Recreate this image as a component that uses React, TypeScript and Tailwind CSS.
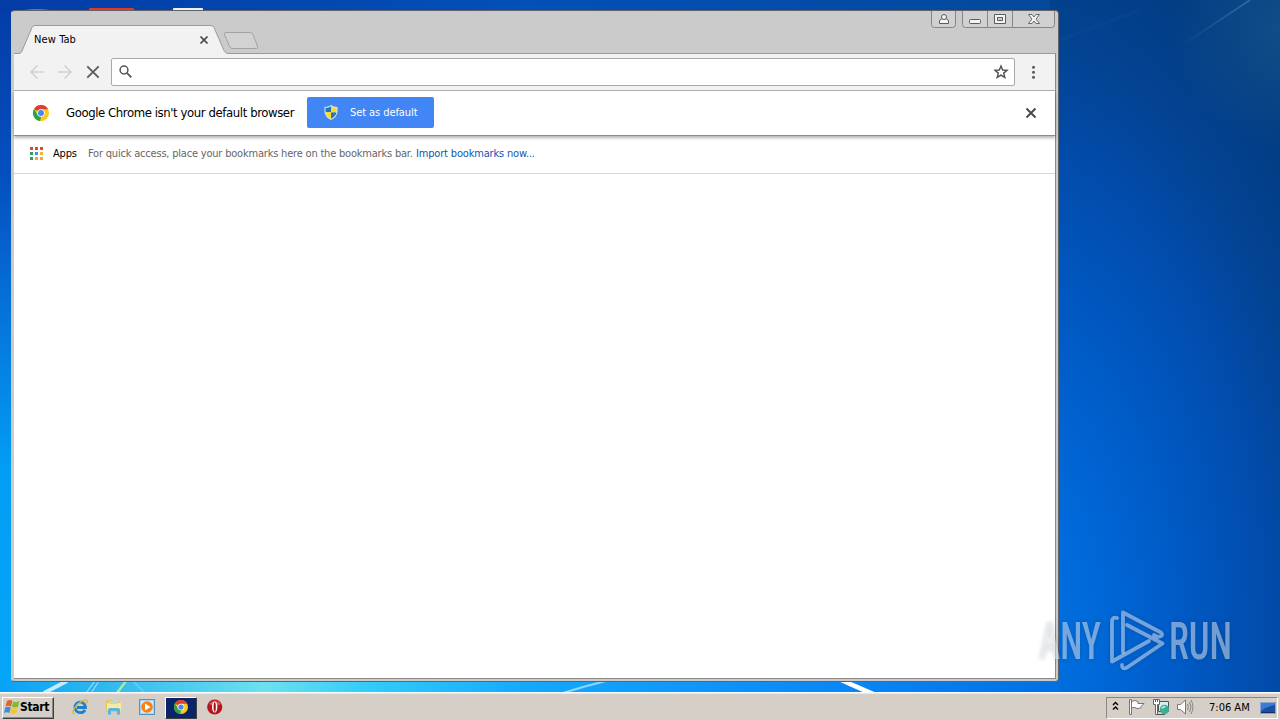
import React from "react";

const UI_FONT = "font-['DejaVu_Sans_Condensed','DejaVu_Sans',sans-serif] [font-stretch:condensed]";

function Wallpaper() {
  return (
    <svg className="absolute inset-0" width="1280" height="720" viewBox="0 0 1280 720">
      <defs>
        <linearGradient id="left" x1="0" y1="0" x2="0" y2="1">
          <stop offset="0" stopColor="#043ca6" />
          <stop offset="0.25" stopColor="#0450c0" />
          <stop offset="0.45" stopColor="#0676dc" />
          <stop offset="0.65" stopColor="#029df4" />
          <stop offset="1" stopColor="#05a8fb" />
        </linearGradient>
        <linearGradient id="top" x1="0" y1="0" x2="1" y2="0">
          <stop offset="0" stopColor="#043ca6" />
          <stop offset="0.5" stopColor="#0250b8" />
          <stop offset="1" stopColor="#04489a" />
        </linearGradient>
        <radialGradient id="right" gradientUnits="userSpaceOnUse" cx="0" cy="0" r="720" gradientTransform="translate(1000 640) scale(.54 1)">
          <stop offset="0" stopColor="#0074e6" />
          <stop offset="0.2" stopColor="#006cdc" />
          <stop offset="0.35" stopColor="#0062d0" />
          <stop offset="0.53" stopColor="#0056be" />
          <stop offset="0.7" stopColor="#024baa" />
          <stop offset="0.84" stopColor="#034392" />
          <stop offset="1" stopColor="#023d84" />
        </radialGradient>
        <radialGradient id="haze" gradientUnits="userSpaceOnUse" cx="1290" cy="30" r="120">
          <stop offset="0" stopColor="#3c7a90" stopOpacity="0.28" />
          <stop offset="1" stopColor="#3c7a90" stopOpacity="0" />
        </radialGradient>
        <linearGradient id="streak" x1="0" y1="1" x2="1" y2="0">
          <stop offset="0" stopColor="#5b91bd" stopOpacity="0" />
          <stop offset="1" stopColor="#5b91bd" stopOpacity="0.5" />
        </linearGradient>
        <linearGradient id="bottom" x1="0" y1="0" x2="1" y2="0">
          <stop offset="0" stopColor="#08a2f6" />
          <stop offset="0.08" stopColor="#28b4f0" />
          <stop offset="0.25" stopColor="#6ce0ee" />
          <stop offset="0.35" stopColor="#30ccfa" />
          <stop offset="0.5" stopColor="#14a8fc" />
          <stop offset="0.8" stopColor="#0a86f6" />
          <stop offset="1" stopColor="#0070e4" />
        </linearGradient>
      </defs>
      <rect width="640" height="720" fill="url(#left)" />
      <rect width="1060" height="12" fill="url(#top)" />
      <rect x="1050" width="230" height="720" fill="url(#right)" />
      <rect x="1050" width="230" height="180" fill="url(#haze)" />
      <rect y="680" width="1060" height="14" fill="url(#bottom)" />
      <path d="M1182 45L1250 0" stroke="url(#streak)" strokeWidth="1.5" />
      <path d="M1060 40L1140 10" stroke="#5b91bd" strokeOpacity=".05" strokeWidth="4" />
      <path d="M44 693L67 681" stroke="#c5ecfb" strokeWidth="4" />
      <path d="M86 693L95 681M91 693L99 681" stroke="#9bdcf6" strokeWidth="1.2" />
      <path d="M117 693L126 681" stroke="#a7e8a6" strokeWidth="2.5" />
      <path d="M133 681L145 693" stroke="#5ccdf0" strokeWidth="2" />
      <path d="M563 693Q585 686 606 681" stroke="#8fd6ff" strokeWidth="2" fill="none" />
      <path d="M838 681L849 681L879 694L867 694Z" fill="#fff" />
      {/* tops of the desktop icons behind the window */}
      <path d="M24 10Q37 8 50 10V11H24Z" fill="#5a7fc0" />
      <rect x="89" y="8" width="45" height="3" rx="1" fill="#e03a24" />
      <rect x="173" y="8" width="30" height="3" rx="1" fill="#eef2f6" />
    </svg>
  );
}

function ChromeIcon({ size = 16 }: { size?: number }) {
  return (
    <svg width={size} height={size} viewBox="0 0 16 16">
      <circle cx="8" cy="8" r="8" fill="#fbc916" />
      <path d="M8 8L1.07 4A8 8 0 0 1 14.93 4L14.9 4.3H8Z" fill="#df3e30" />
      <path d="M1.07 4L4.8 9.9L8 11.6L7.2 16A8 8 0 0 1 1.07 4Z" fill="#2ba24c" />
      <circle cx="8" cy="8" r="3.8" fill="#fff" />
      <circle cx="8" cy="8" r="3" fill="#4688f1" />
    </svg>
  );
}

function TitleBar() {
  return (
    <div className="relative h-[43px] shrink-0">
      <svg className="absolute left-0 top-0" width="1046" height="43" viewBox="12 11 1046 43">
        <path d="M14 54V53.5H19Q21 53.5 22 51L32 27.5Q33 25.5 35 25.5H211Q213 25.5 214 27.5L224 50.5Q225.5 53.5 228 53.5H1056V54Z" fill="#f2f2f2" />
        <path d="M14 53.5H19Q21 53.5 22 51L32 27.5Q33 25.5 35 25.5H211Q213 25.5 214 27.5L224 50.5Q225.5 53.5 228 53.5H1056" fill="none" stroke="#9a9a9a" />
        <path d="M226 32.5H250Q252 32.5 253 34.5L257.5 46Q258.5 48.5 256.5 48.5H232.5Q230.5 48.5 229.5 46.5L224.5 34.5Q223.8 32.5 226 32.5Z" fill="#d2d2d2" stroke="#a2a2a2" />
        <path d="M200.5 36.5L207.5 43.5M207.5 36.5L200.5 43.5" stroke="#444" strokeWidth="1.7" />
        <g fill="#d1d1d1" stroke="#858585">
          <path d="M931.5 11V24.5Q931.5 27.5 934.5 27.5H952.5Q955.5 27.5 955.5 24.5V11" />
          <path d="M962.5 11V24.5Q962.5 27.5 965.5 27.5H1051.5Q1054.5 27.5 1054.5 24.5V11M987.5 11V27M1012.5 11V27" />
        </g>
        <g fill="#f4f4f4" stroke="#5c5c5c">
          <path d="M939.5 23.5V21Q940 19 942 18.8H946Q948.3 19 948.5 21V23.5Z" />
          <circle cx="944" cy="17" r="2.5" />
          <rect x="969.5" y="19.5" width="11" height="4" rx="1" />
          <path fillRule="evenodd" d="M994.5 14.5H1005.5V23.5H994.5ZM997.5 17.5V20.5H1002.5V17.5Z" />
          <path d="M1028.5 14.5H1032L1034 17L1036 14.5H1039.5L1036 19L1039.5 23.5H1036L1034 21L1032 23.5H1028.5L1032 19Z" strokeWidth=".9" />
        </g>
      </svg>
      <span className="absolute left-[22px] top-[21px] whitespace-nowrap text-[11px] leading-[15px] tracking-[0.1px] text-black">New Tab</span>
    </div>
  );
}

function Toolbar() {
  return (
    <div className="flex h-[37px] shrink-0 items-center border-b border-[#b0b0b0] bg-[#f2f2f2]">
      <svg width="97" height="36" viewBox="14 54 97 36" fill="none" className="shrink-0">
        <g stroke="#d2d2d2" strokeWidth="1.7">
          <path d="M44 72H31.5M37.5 65.5L31 72L37.5 78.5" />
          <path d="M58 72H70.5M64.5 65.5L71 72L64.5 78.5" />
        </g>
        <path d="M87.3 66.3L98.7 77.7M98.7 66.3L87.3 77.7" stroke="#5a5a5a" strokeWidth="1.8" />
      </svg>
      <div className="flex h-7 w-[904px] items-center justify-between rounded-[2px] border border-[#a9a9a9] bg-white pl-[6px] pr-[5px]">
        <svg width="16" height="16" viewBox="0 0 16 16" fill="none" stroke="#555">
          <circle cx="6" cy="6" r="3.9" strokeWidth="1.5" />
          <path d="M8.8 8.8L13.3 13.3" strokeWidth="1.8" />
        </svg>
        <svg width="16" height="16" viewBox="0 0 16 16" fill="none" stroke="#505050" strokeWidth="1.4">
          <path d="M8 2L9.7 6L14 6.3L10.7 9.1L11.8 13.4L8 11.1L4.2 13.4L5.3 9.1L2 6.3L6.3 6Z" />
        </svg>
      </div>
      <svg width="37" height="20" viewBox="0 0 37 20" fill="#5a5a5a">
        <circle cx="18.5" cy="5.3" r="1.5" />
        <circle cx="18.5" cy="10.3" r="1.5" />
        <circle cx="18.5" cy="15.3" r="1.5" />
      </svg>
    </div>
  );
}

function DefaultBrowserBar() {
  return (
    <div className="relative z-10 flex h-[45px] shrink-0 items-center border-b border-[#8c8c8c] bg-white pb-px pl-[19px] shadow-[0_2px_3px_rgba(0,0,0,0.3)]">
      <ChromeIcon />
      <span className="ml-[17px] w-[241px] whitespace-nowrap text-[13px] leading-4 tracking-[-0.41px] text-black">Google Chrome isn't your default browser</span>
      <button className="flex h-[31px] w-[127px] items-center rounded-[2px] bg-[#4285f4] pl-[17px] text-white">
        <svg width="14" height="15" viewBox="0 0 14 15">
          <path d="M7 0Q9.5 2 13.5 2V7Q13 12 7 15Q1 12 .5 7V2Q4.5 2 7 0Z" fill="#dce7ed" />
          <path d="M7 1.2V7.3H1.5V3Q5 2.7 7 1.2ZM7 7.3H12.4Q12 11.3 7 13.8Z" fill="#2179bc" />
          <path d="M7 1.2Q9 2.7 12.5 3V7.3H7ZM1.5 7.3H7V13.8Q2 11.3 1.5 7.3Z" fill="#ffdb25" />
        </svg>
        <span className="ml-3 whitespace-nowrap text-[11px] leading-[15px] tracking-[-0.08px]">Set as default</span>
      </button>
      <svg className="absolute right-[18px] top-4" width="12" height="12" viewBox="0 0 12 12">
        <path d="M1.5 1.5L10.5 10.5M10.5 1.5L1.5 10.5" stroke="#484848" strokeWidth="1.9" />
      </svg>
    </div>
  );
}

const APP_DOTS = [
  "bg-[#e04435]", "bg-[#e04435]", "bg-[#e04435]",
  "bg-[#2e9e58]", "bg-[#4688f1]", "bg-[#f5b32c]",
  "bg-[#2e9e58]", "bg-[#f5a52c]", "bg-[#f5a52c]",
];

function BookmarksBar() {
  return (
    <div className="flex h-[38px] shrink-0 items-center border-b border-[#d8d8d8] bg-white pb-[2px] pl-4 text-[11px] leading-[15px]">
      <div className="-mt-px grid grid-cols-3 gap-[2px]">
        {APP_DOTS.map((color, i) => (
          <i key={i} className={`size-[3px] ${color}`} />
        ))}
      </div>
      <span className="ml-[10px] w-[35px] tracking-[-0.2px] text-black">Apps</span>
      <span className="w-[328px] whitespace-nowrap tracking-[-0.2px] text-[#666]">For quick access, place your bookmarks here on the bookmarks bar.</span>
      <span className="whitespace-nowrap tracking-[-0.17px] text-[#1155b0]">Import bookmarks now...</span>
    </div>
  );
}

function BrowserWindow() {
  return (
    <div className="absolute left-[11px] top-[10px] flex h-[672px] w-[1048px] flex-col rounded-[4px] border border-[#5f646b] border-l-[#c5cbd3] bg-[#cbcbcb]">
      <TitleBar />
      <div className="mx-[2px] mb-[2px] flex flex-1 flex-col border-b border-r border-[#8d8883] bg-white">
        <Toolbar />
        <DefaultBrowserBar />
        <BookmarksBar />
        <div className="flex-1 bg-white" />
      </div>
    </div>
  );
}

function Watermark() {
  return (
    <svg className="absolute left-[1020px] top-[590px] overflow-visible drop-shadow-[0_0_2px_rgba(0,0,0,0.3)]" width="250" height="100" viewBox="1020 590 250 100">
      <g className="font-['Roboto',sans-serif] font-medium" fill="#e8f1fc" fillOpacity=".5" fontSize="51">
        <text x="1039" y="659" textLength="62" lengthAdjust="spacingAndGlyphs">ANY</text>
        <text x="1169" y="659" textLength="63" lengthAdjust="spacingAndGlyphs">RUN</text>
      </g>
      <g fill="none" stroke="#dceafb" strokeOpacity=".52" strokeWidth="3.8" strokeLinejoin="round" strokeLinecap="round">
        <path d="M1117 618Q1112 616.5 1112 622V661.500L1149 641" />
        <path d="M1123 652V612.500L1161 632.500Q1164 636 1158 637L1154 635" />
        <path d="M1127 625L1162.500 643.500L1127 667.500Q1122 670 1122 665" />
      </g>
    </svg>
  );
}

function StartFlag() {
  return (
    <svg className="mb-[2px]" width="16" height="16" viewBox="0 0 16 16">
      <path d="M3 2Q6 .2 8.5 2L7 7.5Q4.5 6 1.5 7.5Z" fill="#e5622b" />
      <path d="M9.3 2.5Q12 4 15.5 2L14 7.7Q11 9.3 7.8 7.8Z" fill="#7dbb3c" />
      <path d="M1.3 8.4Q4 7 6.8 8.4L5.3 14Q3 12.5 0 14Z" fill="#3b8fd6" />
      <path d="M7.6 8.7Q10.5 10.2 13.7 8.6L12.2 14Q9 15.7 6 14.2Z" fill="#f6c62f" />
    </svg>
  );
}

function Taskbar() {
  return (
    <div className="absolute inset-x-0 bottom-0 flex h-[28px] items-center border-t border-[#f8fbff] bg-[#d6cfc7] pt-[2px] shadow-[inset_0_1px_0_#ece9e4]">
      <button className="ml-[2px] flex h-[22px] w-[52px] items-center border border-b-[#404040] border-l-white border-r-[#404040] border-t-white pl-[1px] shadow-[inset_-1px_-1px_0_#8b8680]">
        <StartFlag />
        <span className="mb-[2px] text-[12px] font-bold leading-4 tracking-[-0.3px] text-black">Start</span>
      </button>
      {/* Internet Explorer */}
      <svg className="mb-[2px] ml-[18px]" width="16" height="16" viewBox="0 0 16 16" fill="none">
        <path d="M13 11Q11.5 13.7 8.5 13.7A5.3 5.3 0 1 1 13.5 8.5H5" stroke="#1f7fd0" strokeWidth="2.8" />
        <path d="M4 7Q6 3.5 9 3.5" stroke="#7fd0f7" strokeWidth="1.2" />
        <path d="M2.5 15Q-1 14.5 3 8.5Q9 1 13.5 .8Q16.5 1 14.5 4.5" stroke="#dcb43a" strokeWidth="1.3" />
      </svg>
      {/* Explorer */}
      <svg className="mb-[2px] ml-[17px]" width="17" height="16" viewBox="0 0 17 16">
        <path d="M1 3L2 1H7L8 3H15V13H1Z" fill="#e7c35a" />
        <path d="M2 4H16V12H2Z" fill="#f8e9a3" />
        <path d="M4 2H13V5H4Z" fill="#b9e0c0" />
        <path d="M3 15.5V10.5Q3 9 5 9H13Q15 9 15 10.5V15.5H12V12H6V15.5Z" fill="#58b5dd" />
      </svg>
      {/* Media Player */}
      <svg className="mb-[2px] ml-[17px]" width="16" height="16" viewBox="0 0 16 16">
        <rect x=".5" y=".5" width="15" height="15" fill="#a9d2ee" stroke="#5494c4" />
        <rect x="2" y="2" width="12" height="12" fill="#d6ebf8" />
        <circle cx="8" cy="8" r="5.8" fill="#f28318" />
        <path d="M6 4.5L11.5 8L6 11.5Z" fill="#fff" />
      </svg>
      <div className="ml-[10px] flex h-[22px] w-8 items-center justify-center border border-b-[#404040] border-l-white border-r-[#404040] border-t-white bg-[#0a246a] pb-[2px]">
        <ChromeIcon size={14} />
      </div>
      {/* Opera */}
      <svg className="mb-[2px] ml-[10px]" width="16" height="16" viewBox="0 0 16 16">
        <circle cx="7.700" cy="8" r="7.600" fill="#b5151b" />
        <path d="M2 5Q8-2 14 5Q8 8 2 5Z" fill="#d75c5c" />
        <ellipse cx="7.700" cy="8" rx="2.700" ry="5.500" fill="#fff" />
        <ellipse cx="7.700" cy="8" rx="1.100" ry="4.800" fill="#a41015" />
      </svg>
      <div className="ml-auto mr-[2px] flex h-[22px] w-[172px] items-center border border-b-white border-l-[#8b8680] border-r-white border-t-[#8b8680]">
        <svg width="96" height="20" viewBox="1107 698 96 20" fill="none">
          <path d="M1113 705L1115.5 702.5L1118 705M1113 709.5L1115.5 707L1118 709.5" stroke="#000" strokeWidth="1.4" />
          <path d="M1131.5 714.5H1129.5V699.5H1131.5ZM1131.5 701.5Q1135 699.5 1138 701.5V703.5H1144L1141 706.5Q1143 708 1137 708.5Q1134 706.5 1131.5 708Z" fill="#fff" stroke="#777" />
          <path d="M1158.5 701.5H1168.5V711.5H1158.5Z" fill="#d8eef3" stroke="#555" />
          <path d="M1153.5 699.5H1159.5V704.5H1157.5V714.5H1155.5V704.5H1153.5ZM1155.5 699V702M1157.5 699V702" fill="#fff" stroke="#666" />
          <path d="M1157 714.5H1165" stroke="#555" />
          <circle cx="1164.5" cy="709.5" r="4.7" fill="#3cae94" />
          <path d="M1161 708Q1164 705 1166 706Q1163 710 1161 708Z" fill="#b4edda" />
          <path d="M1177.5 704.5H1180.5L1185.5 700V714L1180.5 709.5H1177.5Z" fill="#fff" stroke="#777" />
          <path d="M1187.5 704Q1189 707 1187.5 710M1189.5 702Q1192.5 707 1189.5 712M1191 700Q1195 707 1191 714" stroke="#858585" />
        </svg>
        <span className="ml-[6px] w-[51px] whitespace-nowrap text-[11px] leading-[15px] text-black">7:06 AM</span>
        <svg width="16" height="14" viewBox="0 0 16 14">
          <rect x=".5" y="1.5" width="15" height="11" fill="#174fa6" stroke="#8ca8cf" />
          <path d="M1 2H15V4Q8 5 1 10Z" fill="#3b7bd0" />
          <path d="M1 11H15V12H1Z" fill="#102f62" />
        </svg>
      </div>
    </div>
  );
}

export default function App() {
  return (
    <div className={`relative h-[720px] w-[1280px] overflow-hidden ${UI_FONT}`}>
      <Wallpaper />
      <BrowserWindow />
      <Watermark />
      <Taskbar />
    </div>
  );
}
